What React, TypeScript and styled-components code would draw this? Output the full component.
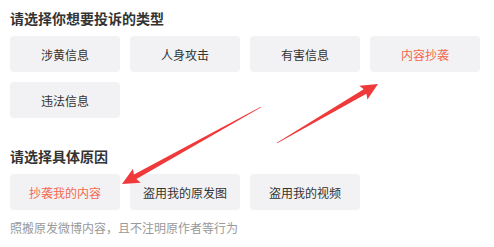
import styled, { createGlobalStyle } from "styled-components";

const GlobalStyle = createGlobalStyle`
  html, body {
    margin: 0;
    padding: 0;
    background: #ffffff;
  }
  body {
    font-family: "Noto Sans CJK SC", "Noto Sans", sans-serif;
  }
`;

const Page = styled.div`
  position: relative;
  width: 494px;
  height: 247px;
  box-sizing: border-box;
  padding: 8px 10px 0;
  overflow: hidden;
`;

const Section = styled.section<{ $gap?: number }>`
  margin-top: ${(p) => p.$gap ?? 0}px;
`;

const Title = styled.h3`
  margin: 0 0 8px;
  font-size: 14px;
  line-height: 20px;
  font-weight: bold;
  color: #333333;
`;

const Options = styled.div`
  display: grid;
  grid-template-columns: repeat(4, 110px);
  gap: 10px;
`;

const Option = styled.div<{ $active?: boolean }>`
  height: 36px;
  border-radius: 4px;
  background: #f2f2f4;
  display: flex;
  align-items: center;
  justify-content: center;
  font-size: 12px;
  color: ${(p) => (p.$active ? "#f2694c" : "#333333")};
  cursor: pointer;
`;

const Hint = styled.p`
  margin: 9px 0 0;
  font-size: 12px;
  line-height: 18px;
  color: #999999;
`;

const Overlay = styled.svg`
  position: absolute;
  left: 0;
  top: 0;
  pointer-events: none;
`;

type Pt = [number, number];

const arrowPoints = (tail: Pt, tip: Pt) => {
  const dx = tip[0] - tail[0];
  const dy = tip[1] - tail[1];
  const len = Math.hypot(dx, dy);
  const ux = dx / len;
  const uy = dy / len;
  const nx = -uy;
  const ny = ux;
  const head = 15;
  const headW = 8;
  const shaftW = 2.6;
  const tailW = 0.4;
  const bx = tip[0] - ux * head;
  const by = tip[1] - uy * head;
  const pts: Pt[] = [
    [tail[0] + nx * tailW, tail[1] + ny * tailW],
    [bx + nx * shaftW, by + ny * shaftW],
    [bx - ux * 2 + nx * headW, by - uy * 2 + ny * headW],
    tip,
    [bx - ux * 2 - nx * headW, by - uy * 2 - ny * headW],
    [bx - nx * shaftW, by - ny * shaftW],
    [tail[0] - nx * tailW, tail[1] - ny * tailW],
  ];
  return pts.map((p) => `${p[0].toFixed(1)},${p[1].toFixed(1)}`).join(" ");
};

const types = ["涉黄信息", "人身攻击", "有害信息", "内容抄袭", "违法信息"];
const reasons = ["抄袭我的内容", "盗用我的原发图", "盗用我的视频"];

export default function App() {
  return (
    <>
      <GlobalStyle />
      <Page>
        <Section>
          <Title>请选择你想要投诉的类型</Title>
          <Options>
            {types.map((t) => (
              <Option key={t} $active={t === "内容抄袭"}>
                {t}
              </Option>
            ))}
          </Options>
        </Section>
        <Section $gap={28}>
          <Title>请选择具体原因</Title>
          <Options>
            {reasons.map((r, i) => (
              <Option key={r} $active={i === 0}>
                {r}
              </Option>
            ))}
          </Options>
          <Hint>照搬原发微博内容，且不注明原作者等行为</Hint>
        </Section>
        <Overlay width="494" height="247" viewBox="0 0 494 247">
          <polygon points={arrowPoints([277, 143], [378, 84])} fill="#f0393b" />
          <polygon points={arrowPoints([261, 107], [122, 184])} fill="#f0393b" />
        </Overlay>
      </Page>
    </>
  );
}
